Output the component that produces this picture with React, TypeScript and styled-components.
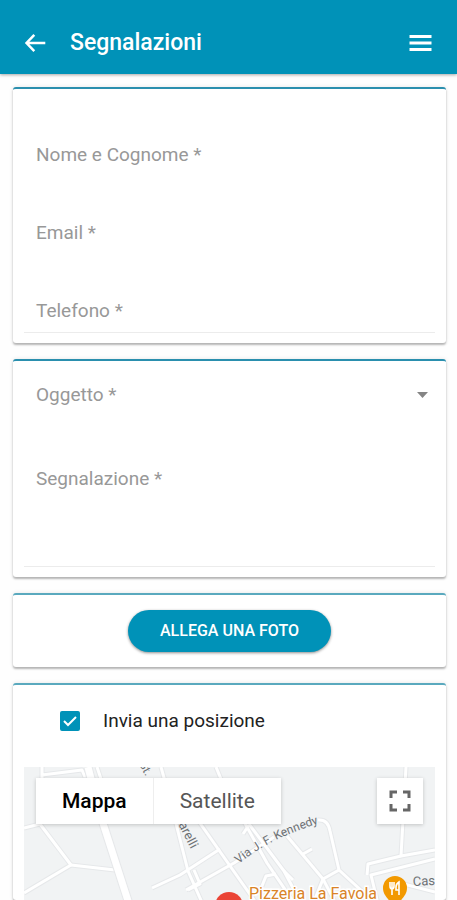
import React from "react";
import styled, { createGlobalStyle } from "styled-components";

const accent = "#0092b8";

const GlobalStyle = createGlobalStyle`
  * { box-sizing: border-box; }
  body { margin: 0; background: #fefefe; font-family: Roboto, "Liberation Sans", sans-serif; }
  button, input, select, textarea { font: inherit; }
`;

const Screen = styled.div`
  height: 100vh;
  display: flex;
  flex-direction: column;
  overflow: hidden;
`;

const Toolbar = styled.header`
  flex: none;
  display: flex;
  align-items: center;
  height: 74px;
  padding: 11px 22px 0;
  background: ${accent};
  color: #fff;
  box-shadow: 0 1px 3px rgba(0, 0, 0, 0.35);
`;

const IconButton = styled.button`
  display: flex;
  padding: 0;
  border: 0;
  background: none;
  color: inherit;
  cursor: pointer;
`;

const Title = styled.h1`
  flex: 1;
  margin: 0 0 0 22px;
  font-size: 23px;
  line-height: 28px;
  font-weight: 500;
`;

const Form = styled.form`
  flex: 1;
  min-height: 0;
  display: flex;
  flex-direction: column;
  gap: 16px;
  padding: 13px 11px 0 13px;
`;

const Card = styled.section<{ $fill?: boolean; $pad?: number; $soft?: boolean }>`
  flex: ${(p) => (p.$fill ? "1" : "none")};
  min-height: 0;
  display: flex;
  flex-direction: column;
  padding: ${(p) => p.$pad ?? 10}px 11px ${(p) => (p.$fill ? 0 : p.$pad ?? 10)}px;
  border-top: 2px solid ${(p) => (p.$soft ? "#5aa9be" : "#2a8fae")};
  border-radius: 3px;
  background: #fff;
  box-shadow: 0 2px 2px rgba(0, 0, 0, 0.26), 0 0 4px rgba(0, 0, 0, 0.1);
`;

const Field = styled.label<{ $height: number; $top: number; $line?: boolean }>`
  display: grid;
  height: ${(p) => p.$height}px;
  padding: ${(p) => p.$top}px 12px 0;
  border-bottom: ${(p) => (p.$line ? "1px solid #ececec" : "0")};
  color: #989898;
  font-size: 19px;
  line-height: 24px;

  > * { grid-area: 1 / 1; }
`;

const FieldLabel = styled.span`
  pointer-events: none;
  z-index: 1;
`;

const control = `
  width: 100%;
  min-width: 0;
  padding: 0;
  border: 0;
  outline: 0;
  background: transparent;
  color: #222;
  &:focus + span, &:not(:placeholder-shown) + span { opacity: 0; }
`;

const TextInput = styled.input`
  ${control}
  height: 24px;
`;

const TextArea = styled.textarea`
  ${control}
  height: 80px;
  resize: none;
`;

const SelectRow = styled.label`
  display: grid;
  grid-template-columns: 1fr auto;
  align-items: center;
  height: 48px;
  padding: 0 7px 0 12px;
  color: #989898;
  font-size: 19px;
  line-height: 24px;

  > * { grid-row: 1; }
`;

const Select = styled.select`
  grid-column: 1 / 3;
  height: 24px;
  width: 100%;
  border: 0;
  outline: 0;
  background: transparent;
  appearance: none;
  color: #222;
`;

const SelectLabel = styled.span`
  grid-column: 1;
  pointer-events: none;
`;

const Caret = styled.svg`
  grid-column: 2;
  pointer-events: none;
`;

const PhotoButton = styled.button`
  align-self: center;
  height: 42px;
  padding: 0 32px;
  border: 0;
  border-radius: 21px;
  background: ${accent};
  color: #fff;
  font-size: 16px;
  font-weight: 500;
  line-height: 24px;
  box-shadow: 0 1px 3px rgba(0, 0, 0, 0.45);
  cursor: pointer;
`;

const CheckRow = styled.label`
  flex: none;
  display: flex;
  align-items: center;
  gap: 23px;
  height: 82px;
  padding: 0 0 10px 36px;
  color: #222;
  font-size: 19px;
  line-height: 24px;
`;

const CheckShell = styled.span`
  display: grid;
  width: 20px;
  height: 20px;
  > * { grid-area: 1 / 1; pointer-events: none; }
`;

const Checkbox = styled.input`
  appearance: none;
  width: 20px;
  height: 20px;
  margin: 0;
  border: 2px solid #888;
  border-radius: 2px;
  && { pointer-events: auto; }
  &:checked { border-color: ${accent}; background: ${accent}; }
  &:not(:checked) + svg { visibility: hidden; }
`;

const MapView = styled.div`
  position: relative;
  flex: 1;
  min-height: 100px;
  overflow: hidden;
  background: #f1f3f4;
`;

const MapDrawing = styled.svg`
  display: block;
  width: 100%;
  height: 100%;
`;

const MapControls = styled.div`
  position: absolute;
  top: 11px;
  left: 12px;
  right: 12px;
  display: flex;
  justify-content: space-between;
`;

const MapTypes = styled.div`
  display: flex;
  background: #fff;
  box-shadow: 0 1px 4px rgba(0, 0, 0, 0.2);
`;

const MapType = styled.button<{ $active?: boolean }>`
  height: 46px;
  padding: 0 26px;
  border: 0;
  border-left: ${(p) => (p.$active ? "0" : "1px solid #eee")};
  background: none;
  color: ${(p) => (p.$active ? "#000" : "#565656")};
  font-size: 21px;
  font-weight: ${(p) => (p.$active ? 500 : 400)};
  line-height: 24px;
  cursor: pointer;
`;

const Fullscreen = styled(IconButton)`
  width: 46px;
  height: 46px;
  align-items: center;
  justify-content: center;
  background: #fff;
  color: #666;
  box-shadow: 0 1px 4px rgba(0, 0, 0, 0.2);
`;

const streets = [
  "M18 0V14M18 8L58 3L61 10",
  "M73 0L77 12",
  "M137 0L144 25L164 104L180 140",
  "M192 0L199 17L243 96L273 140",
  "M0 61L16 57L47 98L0 126",
  "M47 98L91 103",
  "M128 121L156 108L196 82",
  "M162 123L210 96L250 70",
  "M171 49L218 116L235 140",
  "M164 123L176 117L170 103",
  "M225 57L260 104L279 140",
  "M219 67L225 58",
  "M252 107L242 109L238 119M260 104L269 113",
  "M263 69L299 112L312 137",
  "M279 87L288 82",
  "M294 53Q304 52 306 64L315 103L352 137",
  "M299 112L315 103M299 112L289 137",
  "M382 0L377 89L411 83",
  "M343 108L344 97L377 89M354 137L347 108L411 92",
  "M372 115L411 125",
];

const StreetMap = () => (
  <MapDrawing viewBox="0 0 411 133" preserveAspectRatio="xMidYMin slice" role="img" aria-label="Mappa della zona">
    <rect width="411" height="133" fill="#f1f3f4" />
    <g fill="none" strokeLinejoin="round">
      {streets.map((d) => (
        <path key={d} d={d} stroke="#e6e8ea" strokeWidth="5" />
      ))}
      {streets.map((d) => (
        <path key={d} d={d} stroke="#fff" strokeWidth="3" />
      ))}
      <path d="M64 0L77 50L106 140" stroke="#e6e8ea" strokeWidth="9" />
      <path d="M64 0L77 50L106 140" stroke="#fff" strokeWidth="7" />
    </g>
    <g fill="#6d7175" fontFamily="Roboto, sans-serif" fontSize="13">
      <text transform="translate(115 -3) rotate(62)" fontSize="12">St.</text>
      <text transform="translate(151 51) rotate(63)">barelli</text>
      <path id="kennedy" d="M215 97Q247 69 310 52" fill="none" />
      <text fontSize="12"><textPath href="#kennedy">Via J. F. Kennedy</textPath></text>
      <text x="389" y="119" transform="rotate(-3 389 119)">Case</text>
    </g>
    <text x="225" y="132" fill="#d98428" stroke="#fff" strokeWidth="3" paintOrder="stroke" fontFamily="Roboto, sans-serif" fontSize="16" fontWeight="400">Pizzeria La Favola</text>
    <path d="M371 109a12 12 0 0 1 12 12c0 8-7 12-12 20c-5-8-12-12-12-20a12 12 0 0 1 12-12z" fill="#f29900" />
    <path d="M366 115v4q0 3 2 3t2-3v-4M368 115v13M375 128V115q-3 2-3 5v3h3" fill="none" stroke="#fff" strokeWidth="1.6" />
    <circle cx="205" cy="139" r="14" fill="#ea4335" />
  </MapDrawing>
);

export default function App() {
  return (
    <>
      <GlobalStyle />
      <Screen>
        <Toolbar>
          <IconButton type="button" aria-label="Indietro">
            <svg width="26" height="26" viewBox="0 0 24 24" fill="currentColor">
              <path d="M21.500 10.800H6.800l5.400-5.400L10.500 3.600 2.600 12l7.900 8.400 1.700-1.800L6.800 13.200H21.500z" />
            </svg>
          </IconButton>
          <Title>Segnalazioni</Title>
          <IconButton type="button" aria-label="Menu">
            <svg width="30" height="30" viewBox="0 0 30 30" fill="currentColor">
              <path d="M4.500 7h22v3h-22zM4.500 13.500h22v3h-22zM4.500 20h22v3h-22z" />
            </svg>
          </IconButton>
        </Toolbar>
        <Form onSubmit={(e) => e.preventDefault()}>
          <Card>
            <Field $height={78} $top={44}>
              <TextInput name="nome" placeholder=" " />
              <FieldLabel>Nome e Cognome *</FieldLabel>
            </Field>
            <Field $height={78} $top={44}>
              <TextInput name="email" type="email" placeholder=" " />
              <FieldLabel>Email *</FieldLabel>
            </Field>
            <Field $height={78} $top={44} $line>
              <TextInput name="telefono" type="tel" placeholder=" " />
              <FieldLabel>Telefono *</FieldLabel>
            </Field>
          </Card>
          <Card>
            <SelectRow>
              <Select name="oggetto" defaultValue="">
                <option value="" />
              </Select>
              <SelectLabel>Oggetto *</SelectLabel>
              <Caret width="11" height="6" viewBox="0 0 11 6" fill="#858585">
                <path d="M0 0h11L5.500 6z" />
              </Caret>
            </SelectRow>
            <Field $height={148} $top={48} $line>
              <TextArea name="segnalazione" placeholder=" " />
              <FieldLabel>Segnalazione *</FieldLabel>
            </Field>
          </Card>
          <Card $pad={15} $soft>
            <PhotoButton type="button">ALLEGA UNA FOTO</PhotoButton>
          </Card>
          <Card $fill $pad={0} $soft>
            <CheckRow>
              <CheckShell>
                <Checkbox type="checkbox" name="posizione" defaultChecked />
                <svg width="20" height="20" viewBox="0 0 20 20" fill="none" stroke="#fff" strokeWidth="2">
                  <path d="M4 10l4 4 8-8" />
                </svg>
              </CheckShell>
              Invia una posizione
            </CheckRow>
            <MapView>
              <StreetMap />
              <MapControls>
                <MapTypes>
                  <MapType type="button" $active>Mappa</MapType>
                  <MapType type="button">Satellite</MapType>
                </MapTypes>
                <Fullscreen type="button" aria-label="Schermo intero">
                  <svg width="22" height="22" viewBox="0 0 22 22" fill="none" stroke="currentColor" strokeWidth="3">
                    <path d="M2 8V2H8M14 2h6v6M20 14v6h-6M8 20H2v-6" />
                  </svg>
                </Fullscreen>
              </MapControls>
            </MapView>
          </Card>
        </Form>
      </Screen>
    </>
  );
}
